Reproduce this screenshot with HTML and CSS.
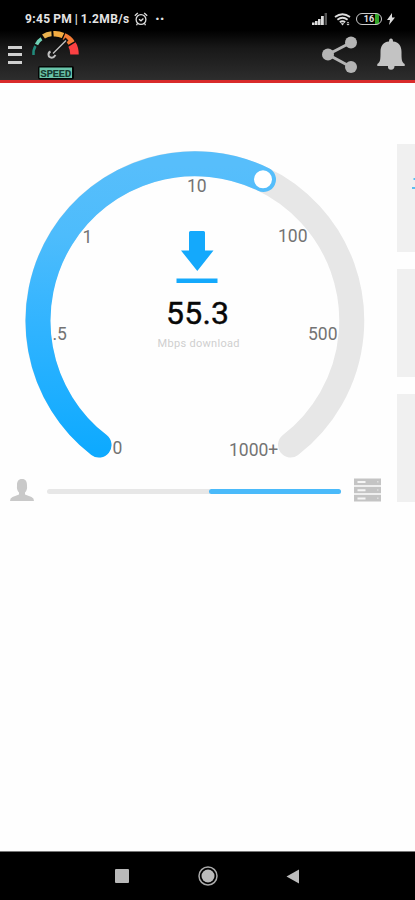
FILE: index.html
```
<!DOCTYPE html>
<html lang="en">
	<head>
		<meta charset="utf-8">
		<title>Speed Test</title>
		<link rel="stylesheet" href="styles.css">
	</head>
	<body>
		<header>
			<div class="statusbar">
				<span class="clock">9:45 PM | 1.2MB/s</span>
				<svg class="alarm" width="14" height="14" viewBox="0 0 14 14" fill="none" stroke="#ddd" stroke-width="1.3">
					<circle cx="7" cy="7.5" r="4.9"/>
					<path d="M.8 3.7L3.8 1M13.2 3.7L10.2 1M3.6 11.3L2.5 13.3M10.4 11.3L11.5 13.3M5 7.2L7 8.8L9.4 6.5"/>
				</svg>
				<span class="dots">··</span>
				<div class="signals">
					<svg width="16" height="12" viewBox="0 0 16 12" fill="#ddd">
						<path d="M0 9.500h2.600v2.500H0zM3 8h2.600v4H3zM6 6h2.600v6H6zM9 3h2.800v9H9z"/>
						<path fill="#555" d="M12.600 0h2.400v12h-2.400z"/>
					</svg>
					<svg width="17" height="13" viewBox="0 0 17 13" fill="none" stroke="#ddd" stroke-width="1.8">
						<path d="M1 4Q8.5-1.5 16 4M3.4 6.8Q8.5 2.8 13.6 6.8M5.8 9.3Q8.5 7.2 11.2 9.3"/>
						<path fill="#ddd" stroke="none" d="M6.7 10.2h3.6L8.5 12.4zM12.5 10.3l1.5-1.6 1.5 1.6zM12.5 11l1.5 1.6 1.5-1.6z"/>
					</svg>
					<div class="battery"><span>16</span></div>
					<svg width="8" height="12" viewBox="0 0 8 12" fill="#ddd"><path d="M5 0L0 7h3L2 12l6-7.500H5z"/></svg>
				</div>
			</div>
			<div class="toolbar">
				<div class="menu"><i></i><i></i><i></i></div>
				<svg class="logo" width="52" height="51" viewBox="0 0 52 51" fill="none">
					<!-- scale segments -->
					<path stroke="#218b7c" stroke-width="2.500" d="M3.500 26Q3 21 5.500 17"/>
					<path stroke="#70d1b5" stroke-width="3.500" d="M6.500 15.500Q8.500 11.500 11.500 9.800"/>
					<path stroke="#e9b24f" stroke-width="5" d="M13.500 7.500Q17 5 21.500 4.800"/>
					<path stroke="#f3ac42" stroke-width="5.500" d="M23.500 4.700Q28.500 4.300 33 6.500"/>
					<path stroke="#f57c35" stroke-width="7" d="M34 7.500Q39 9.500 41.500 14"/>
					<path stroke="#fb4143" stroke-width="8.500" d="M42 15.500Q44.500 19.500 44.500 25.500"/>
					<!-- needle -->
					<path stroke="#111" stroke-width="4" d="M22 25L37 10"/>
					<path stroke="#c0c0c0" stroke-width="1.500" d="M23 24.500L36 11.500"/>
					<path stroke="#c0c0c0" stroke-width="2" d="M20.500 22.500Q17.500 24 19 27.500Q22.500 30.500 25.500 26"/>
					<rect x="8" y="37" width="36" height="13.500" rx="2" fill="#050505"/>
					<rect x="9.500" y="38.500" width="32.500" height="10.500" fill="#69c5aa"/>
					<text x="25.800" y="47.500" text-anchor="middle" textLength="31">SPEED</text>
				</svg>
				<svg class="share" width="36" height="37" viewBox="0 0 36 37" fill="#b4b4b4">
					<path fill="none" stroke="#b4b4b4" stroke-width="3" d="M29 6.500L6 18.500L29 31"/>
					<circle cx="29" cy="6.500" r="6"/><circle cx="6" cy="18.500" r="6"/><circle cx="29" cy="31" r="6"/>
				</svg>
				<svg class="bell" width="28" height="33" viewBox="0 0 28 33" fill="#c3c3c3">
					<path d="M12 3.500Q12 .5 14 .5T16 3.500C22 4 24.500 8 24.500 14C24.500 21 24.500 24 27.700 26V28H.3V26C3.500 24 3.500 21 3.500 14C3.500 8 6 4 12 3.500Z"/>
					<path d="M11 28h6.500Q17.500 31.700 14 31.700T11 28z"/>
				</svg>
			</div>
		</header>
		<main>
			<section class="test">
				<svg class="gauge" width="340" height="311" viewBox="25 150 340 311">
					<defs>
						<linearGradient id="fill" gradientUnits="userSpaceOnUse" x1="0" y1="450" x2="0" y2="165">
							<stop offset="0" stop-color="#0eaaff"/>
							<stop offset=".45" stop-color="#32b4ff"/>
							<stop offset=".75" stop-color="#4dbcfc"/>
							<stop offset="1" stop-color="#57befb"/>
						</linearGradient>
					</defs>
					<path class="track" d="M99 445A157 157 0 1 1 290.500 445"/>
					<path class="progress" d="M99 445A157 157 0 0 1 263.500 179.500"/>
					<circle cx="263" cy="179.300" r="9" fill="#fff"/>
					<g class="ticks">
						<text x="112.500" y="454">0</text>
						<text x="52.500" y="339.500">.5</text>
						<text x="82.500" y="242.500">1</text>
						<text x="187" y="192">10</text>
						<text x="278" y="241.500">100</text>
						<text x="308" y="339.500">500</text>
						<text x="229" y="456">1000+</text>
					</g>
					<path fill="#14a9fc" d="M190.500 231h13Q205 231 205 232.500V250.500H213.500L197.300 271L181 250.500H189V232.500Q189 231 190.500 231zM176.500 278.500h41v4.500h-41z"/>
					<text class="speed" x="197.500" y="323.500" text-anchor="middle" textLength="63">55.3</text>
					<text class="unit" x="198.500" y="346.500" text-anchor="middle" textLength="82">Mbps download</text>
				</svg>
				<div class="route">
					<svg width="24" height="23" viewBox="0 0 24 23" fill="#c9c9c9">
						<path d="M12 0C15.800 0 17 2.500 17 6.500Q17.500 11 15 13.500V15.500L21.500 18Q24 19 24 22H0Q0 19 2.500 18L9 15.500V13.500Q6.500 11 7 6.500C7 2.500 8.200 0 12 0z"/>
					</svg>
					<div class="bar"><span></span></div>
					<svg width="27" height="24" viewBox="0 0 27 24" fill="#c4c4c4">
						<path d="M0 .5h27v6.700H0zM0 8.700h27v6.600H0zM0 16.800h27v6.700H0z"/>
						<path fill="#f5f5f5" d="M3.500 3h8v2h-8zM3.500 11.200h8v2h-8zM3.500 19.400h8v2h-8z"/>
						<path fill="#ddd" d="M23 3h1.500v1.500H23zM23 11.200h1.500v1.500H23zM23 19.400h1.500v1.500H23z"/>
					</svg>
				</div>
			</section>
			<aside>
				<div class="card">
					<svg width="3" height="12" viewBox="0 0 3 12" fill="#5cbdf0"><path d="M1.500 0H3V2H1.500zM0 9h3v2H0z"/></svg>
				</div>
				<div class="card"></div>
				<div class="card"></div>
			</aside>
		</main>
		<nav>
			<svg width="14" height="14"><rect width="14" height="14" rx="1" fill="#b9b9b9"/></svg>
			<svg width="20" height="20"><circle cx="10" cy="10" r="9" fill="none" stroke="#aaa" stroke-width="1.500"/><circle cx="10" cy="10" r="6.500" fill="#bbb"/></svg>
			<svg width="14" height="15"><path fill="#bbb" d="M13 .5v14L.5 7.500z"/></svg>
		</nav>
	</body>
</html>
```
FILE: styles.css
```
* {
	box-sizing: border-box;
}
body {
	margin: 0;
	height: 900px;
	display: flex;
	flex-direction: column;
	overflow: hidden;
	background-color: #fefefe;
	font-family: Roboto, sans-serif;
}
svg {
	display: block;
	flex-shrink: 0;
}
header {
	height: 83px;
	background: linear-gradient(#000 30px, #181818 48px, #2d2d2d 80px);
	border-bottom: 3px solid #d92a2a;
}
.statusbar {
	height: 29px;
	padding: 9px 20px 0 25px;
	display: flex;
	align-items: center;
	color: #e4e4e4;
}
.clock {
	width: 106px;
	font-size: 12px;
	font-weight: bold;
	letter-spacing: 0.4px;
	word-spacing: -0.8px;
	white-space: nowrap;
}
.alarm {
	margin-left: 3px;
}
.dots {
	margin-left: 7px;
	font-size: 16px;
	font-weight: bold;
	line-height: 14px;
}
.signals {
	margin-left: auto;
	display: flex;
	align-items: center;
	gap: 6px;
}
.battery {
	width: 26px;
	height: 12px;
	margin: 0 -1px;
	border: 1.5px solid #ccc;
	border-radius: 6px;
	background: linear-gradient(90deg, transparent 18px, #32a528 18px, #32a528 22px, transparent 22px);
	font-size: 9px;
	font-weight: bold;
	line-height: 10px;
	text-align: center;
}
.toolbar {
	height: 51px;
	padding: 0 10px 0 8px;
	display: flex;
	align-items: center;
}
.menu {
	width: 14px;
	display: flex;
	flex-direction: column;
	gap: 4.5px;
}
.menu i {
	height: 3px;
	background-color: #d0d0d0;
}
.logo {
	margin-left: 8px;
}
.logo text {
	font: bold 11px "Liberation Mono", monospace;
	fill: #15382e;
}
.share {
	margin-left: auto;
}
.bell {
	margin-left: 19px;
}
main {
	flex: 1;
	display: flex;
	justify-content: space-between;
}
.test {
	padding: 67px 0 0 10px;
}
.gauge {
	margin-left: 15px;
}
.track, .progress {
	fill: none;
	stroke: #e7e7e7;
	stroke-width: 25px;
	stroke-linecap: round;
}
.progress {
	stroke: url(#fill);
}
.ticks {
	font-size: 17.5px;
	fill: #737373;
}
.speed {
	font-size: 32px;
	fill: #080808;
	stroke: #080808;
	stroke-width: 0.4px;
}
.unit {
	font-size: 11px;
	fill: #cfcfcf;
}
.route {
	margin-top: 17px;
	display: flex;
	align-items: center;
}
.bar {
	width: 294px;
	height: 5px;
	margin: 2px 13px 0;
	border-radius: 3px;
	background-color: #e7e7e7;
}
.bar span {
	display: block;
	width: 132px;
	height: 5px;
	margin-left: auto;
	border-radius: 3px;
	background-color: #4abafa;
}
aside {
	width: 18px;
	padding-top: 61px;
	display: flex;
	flex-direction: column;
	gap: 17px;
}
.card {
	height: 108px;
	padding: 34px 0 0 15px;
	background-color: #f0f0f0;
}
nav {
	height: 49px;
	padding: 0 115px;
	display: flex;
	align-items: center;
	justify-content: space-between;
	background-color: #000;
	border-top: 1px solid #777;
}
```
